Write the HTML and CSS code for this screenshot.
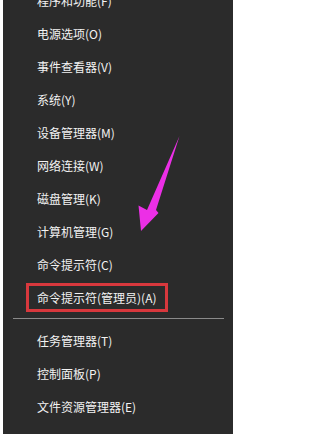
FILE: index.html
```html
<!DOCTYPE html>
<html lang="zh-CN">
<head>
<meta charset="utf-8">
<title>Win+X 菜单</title>
<link rel="stylesheet" href="styles.css">
</head>
<body>
<div class="menu">
  <ul class="group first">
    <li class="item">程序和功能(F)</li>
    <li class="item">电源选项(O)</li>
    <li class="item">事件查看器(V)</li>
    <li class="item">系统(Y)</li>
    <li class="item">设备管理器(M)</li>
    <li class="item">网络连接(W)</li>
    <li class="item">磁盘管理(K)</li>
    <li class="item">计算机管理(G)</li>
    <li class="item">命令提示符(C)</li>
    <li class="item"><span class="highlight">命令提示符(管理员)(A)</span></li>
  </ul>
  <div class="separator"></div>
  <ul class="group">
    <li class="item">任务管理器(T)</li>
    <li class="item">控制面板(P)</li>
    <li class="item">文件资源管理器(E)</li>
    <li class="item">搜索(S)</li>
  </ul>
  <svg class="arrow" width="60" height="110" viewBox="130 130 60 110" aria-hidden="true">
    <polygon points="179.5,136 156,210 158.5,213 141,231 138.5,205.5 147,210" fill="#ec2fe6"/>
  </svg>
</div>
</body>
</html>
```

FILE: styles.css
```css
html, body {
  margin: 0;
  padding: 0;
  background: #ffffff;
}

body {
  width: 238px;
  height: 434px;
  overflow: hidden;
  font-family: "Noto Sans CJK SC", "Noto Sans", "Liberation Sans", sans-serif;
}

.menu {
  position: relative;
  margin-left: 3px;
  width: 230px;
  height: 434px;
  background: #2b2b2b;
  overflow: hidden;
}

.group {
  list-style: none;
  margin: 0;
  padding: 0;
}

.group.first {
  margin-top: -16.5px;
}

.item {
  height: 33px;
  display: flex;
  align-items: center;
  padding-left: 34px;
  color: #f2f2f2;
  font-size: 12px;
  white-space: nowrap;
}

.highlight {
  display: inline-block;
  margin-left: -11px;
  padding: 0 8px;
  border: 3px solid #d8383d;
  line-height: 23px;
}

.separator {
  height: 1px;
  margin: 4px 9px 5px 10px;
  background: #8a8a8a;
}

.arrow {
  position: absolute;
  left: 127px;
  top: 130px;
}
```
